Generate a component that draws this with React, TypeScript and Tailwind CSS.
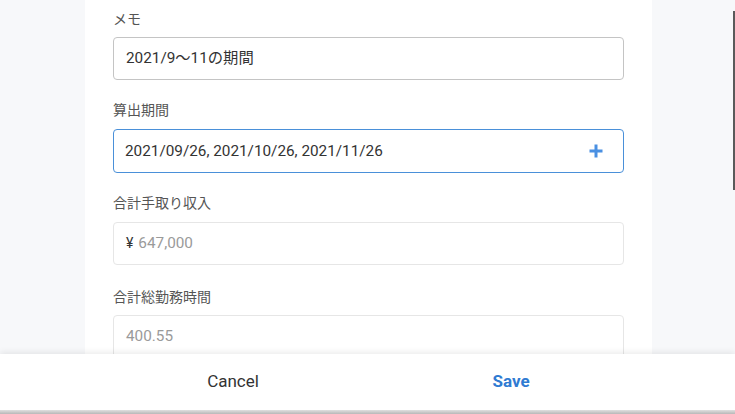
import { ReactNode } from 'react';

const font = { fontFamily: 'Roboto, "Noto Sans CJK JP", sans-serif' };

function Label({ children, className }: { children: ReactNode; className?: string }) {
  return <p className={`h-[20px] text-[14px] leading-[20px] text-[#555] ${className ?? ''}`}>{children}</p>;
}

export default function App() {
  return (
    <div className="relative h-[414px] w-[735px] overflow-hidden bg-[#f7f8fa]" style={font}>
      <div className="ml-[85px] h-full w-[567px] bg-white px-[28px] pt-[9px]">
        <Label className="mb-[8px]">メモ</Label>
        <div className="flex h-[43px] items-center rounded-[4px] border border-[#c4c4c4] px-[12px] text-[15.3px] text-[#333]">
          2021/9〜11の期間
        </div>

        <Label className="mt-[20px] mb-[9px]">算出期間</Label>
        <div className="flex h-[44px] items-center justify-between rounded-[4px] border border-[#4a90d9] pl-[11px] pr-[19px] text-[15.3px] text-[#333]">
          <span>2021/09/26, 2021/10/26, 2021/11/26</span>
          <svg width="16" height="16" viewBox="0 0 16 16" fill="none">
            <path d="M8 1.5v13M1.5 8h13" stroke="#4a90e2" strokeWidth="3" />
          </svg>
        </div>

        <Label className="mt-[20px] mb-[9px]">合計手取り収入</Label>
        <div className="flex h-[43px] items-center gap-[5px] rounded-[4px] border border-[#e6e6e6] px-[12px] text-[15.3px]">
          <span className="text-[14px] text-[#333]">¥</span>
          <span className="text-[#9a9a9a]">647,000</span>
        </div>

        <Label className="mt-[22px] mb-[8px]">合計総勤務時間</Label>
        <div className="flex h-[43px] items-center rounded-[4px] border border-[#e6e6e6] px-[12px] text-[15.3px] text-[#9a9a9a]">
          400.55
        </div>
      </div>

      <div className="absolute right-0 top-[11px] h-[179px] w-[2px] bg-[#5a5a5a]" />

      <div className="absolute bottom-0 left-0 w-full">
        <div className="flex h-[56px] items-center bg-white pl-[133px] shadow-[0_-2px_6px_rgba(0,0,0,0.08)]">
          <button className="w-[200px] text-center text-[17px] text-[#333]">Cancel</button>
          <button className="ml-[78px] w-[200px] text-center text-[17px] font-bold text-[#2f7bd2]">Save</button>
        </div>
        <div className="h-[4px] bg-gradient-to-b from-[#e0e0e0] to-[#b8b8b8]" />
      </div>
    </div>
  );
}
